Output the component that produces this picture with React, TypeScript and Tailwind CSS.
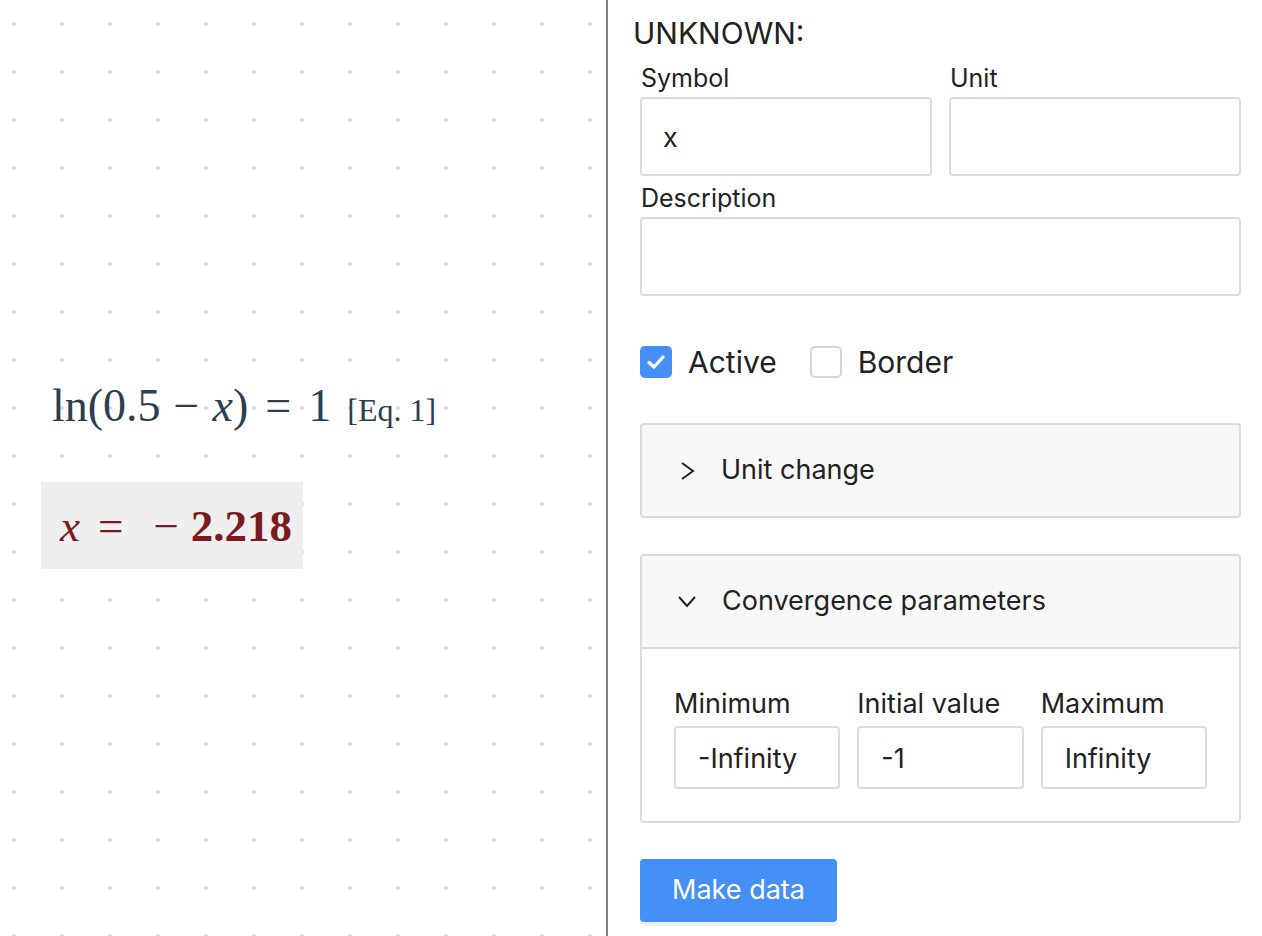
import { useState } from "react";

const sans = "font-['Inter','Noto_Sans',sans-serif]";
const serif = "font-['Liberation_Serif','DejaVu_Serif',serif]";

function Field({ label, value, className }: { label: string; value?: string; className?: string }) {
  return (
    <div className={className}>
      <div className="text-[25px] leading-[32px] text-[#222] pl-px">{label}</div>
      <div className="mt-[3px] h-[79px] rounded-[4px] border-2 border-[#dcdcdc] bg-white flex items-center px-[21px] pt-[3px] text-[27px] text-[#222]">
        {value}
      </div>
    </div>
  );
}

function SmallField({ label, value }: { label: string; value: string }) {
  return (
    <div className="flex-1">
      <div className="text-[27px] leading-[34px] text-[#222]">{label}</div>
      <div className="mt-[5px] h-[63px] rounded-[4px] border-2 border-[#dcdcdc] bg-white flex items-center px-[22px] pt-[3px] text-[27px] text-[#222]">
        {value}
      </div>
    </div>
  );
}

function Check({ checked, label }: { checked: boolean; label: string }) {
  return (
    <label className="flex items-center gap-4">
      {checked ? (
        <span className="w-8 h-8 rounded-[5px] bg-[#4590f7] flex items-center justify-center">
          <svg width="20" height="16" viewBox="0 0 20 16">
            <polyline points="3,8.5 8,13 17,3" fill="none" stroke="#fff" strokeWidth="3.2" strokeLinecap="round" strokeLinejoin="round" />
          </svg>
        </span>
      ) : (
        <span className="w-8 h-8 rounded-[5px] border-2 border-[#d4d4d4] bg-white" />
      )}
      <span className="text-[30px] leading-[36px] text-[#222]">{label}</span>
    </label>
  );
}

export default function App() {
  const [open] = useState(true);

  return (
    <div className={`flex w-full h-[936px] bg-white overflow-hidden ${sans}`}>
      {/* sheet */}
      <div className="w-[606px] shrink-0 bg-white bg-[radial-gradient(circle,#dadada_1.6px,transparent_1.7px)] bg-[size:48px_48px] bg-[position:-10px_0px] pt-[380px]">
        <div className={`pl-[52px] flex items-baseline text-[#2c3e50] ${serif}`}>
          <span className="text-[46px] leading-[52px]">
            ln(0.5<span className="mx-[13px]">−</span><i>x</i>)<span className="mx-[17px]">=</span>1
          </span>
          <span className="ml-[16px] text-[32px]">[Eq. 1]</span>
        </div>
        <div className="ml-[41px] mt-[48px] w-[262px] h-[87px] bg-[#efefef] flex items-center pl-[19px]">
          <span className={`text-[45px] leading-[52px] text-[#7b1a1f] ${serif}`}>
            <i>x</i>
            <span className="ml-[18px]">=</span>
            <span className="ml-[30px]">−</span>
            <span className="ml-[12px] font-bold">2.218</span>
          </span>
        </div>
      </div>

      {/* divider */}
      <div className="w-[2px] bg-[#7f7f7f] shrink-0" />

      {/* properties */}
      <div className="flex-1 pl-[25px] pr-[21px] pt-[14px]">
        <div className="text-[30px] leading-[38px] text-[#222]">UNKNOWN:</div>
        <div className="ml-[7px]">
          <div className="flex gap-[17px] mt-[10px]">
            <Field label="Symbol" value="x" className="flex-1" />
            <Field label="Unit" className="flex-1" />
          </div>
          <Field label="Description" className="mt-[6px]" />

          <div className="flex items-center gap-[33px] mt-[48px]">
            <Check checked label="Active" />
            <Check checked={false} label="Border" />
          </div>

          <div className="mt-[43px] h-[95px] rounded-[4px] border-2 border-[#dcdcdc] bg-[#f8f8f8] flex items-center pl-[38px] gap-[25px]">
            <svg width="16" height="20" viewBox="0 0 16 20">
              <polyline points="2,2 13,10 2,18" fill="none" stroke="#222" strokeWidth="2" />
            </svg>
            <span className="text-[27px] text-[#222]">Unit change</span>
          </div>

          <div className="mt-[36px] rounded-[4px] border-2 border-[#dcdcdc] overflow-hidden">
            <div className="h-[93px] bg-[#f8f8f8] border-b-2 border-[#dcdcdc] flex items-center pl-[35px] gap-[25px]">
              <svg width="20" height="14" viewBox="0 0 20 14">
                <polyline points="2,2 10,11 18,2" fill="none" stroke="#222" strokeWidth="2" />
              </svg>
              <span className="text-[27px] text-[#222]">Convergence parameters</span>
            </div>
            {open && (
              <div className="bg-white px-[32px] pt-[38px] pb-[32px] flex gap-[17px]">
                <SmallField label="Minimum" value="-Infinity" />
                <SmallField label="Initial value" value="-1" />
                <SmallField label="Maximum" value="Infinity" />
              </div>
            )}
          </div>

          <button className="mt-[36px] w-[197px] h-[63px] rounded-[4px] bg-[#4590f7] text-white text-[27px] shadow-[0_4px_0_#efefef]">
            Make data
          </button>
        </div>
      </div>
    </div>
  );
}
